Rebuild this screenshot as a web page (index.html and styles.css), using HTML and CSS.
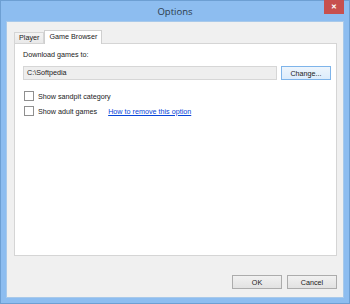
FILE: index.html
```html
<!DOCTYPE html>
<html lang="en">
<head>
    <meta charset="UTF-8">
    <title>Options</title>
    <link rel="stylesheet" href="styles.css">
</head>
<body>
    <div class="window">
        <div class="title-bar">
            <div class="title">Options</div>
            <div class="close-btn">&#x2715;</div>
        </div>

        <div class="client">
            <div class="tabs">
                <div class="tab">Player</div>
                <div class="tab active">Game Browser</div>
            </div>

            <div class="tab-panel">
                <div class="field-label">Download games to:</div>
                <div class="path-row">
                    <div class="path-box">C:\Softpedia</div>
                    <div class="button change-btn">Change...</div>
                </div>

                <div class="check-row first">
                    <span class="checkbox"></span>
                    <span class="check-label">Show sandpit category</span>
                </div>
                <div class="check-row">
                    <span class="checkbox"></span>
                    <span class="check-label">Show adult games</span>
                    <a class="link" href="#">How to remove this option</a>
                </div>
            </div>

            <div class="button-row">
                <div class="button">OK</div>
                <div class="button">Cancel</div>
            </div>
        </div>
    </div>
</body>
</html>
```

FILE: styles.css
```css
:root {
    --frame: #8dbdf0;
    --frame-edge: #6d9fd3;
    --face: #f0f0f0;
    --line: #d5d5d5;
    --text: #1a1a1a;
}

* {
    margin: 0;
    padding: 0;
    box-sizing: border-box;
}

body {
    width: 350px;
    height: 304px;
    overflow: hidden;
    font-family: 'Liberation Sans', Arial, sans-serif;
    font-size: 7.2px;
    color: var(--text);
}

.window {
    width: 350px;
    height: 304px;
    background: var(--frame);
    border: 1px solid var(--frame-edge);
    display: flex;
    flex-direction: column;
    padding: 0 5px 5px 5px;
}

.title-bar {
    height: 20px;
    flex-shrink: 0;
    position: relative;
    display: flex;
    justify-content: center;
    align-items: center;
}

.title {
    font-family: 'Open Sans', sans-serif;
    font-size: 9.5px;
    color: #2b3a4a;
    padding-top: 1px;
}

.close-btn {
    position: absolute;
    top: -1px;
    right: 0;
    width: 20px;
    height: 14px;
    background: #c7504e;
    color: #fff;
    font-size: 7px;
    font-weight: bold;
    display: flex;
    justify-content: center;
    align-items: center;
}

.client {
    flex: 1;
    background: var(--face);
    border: 1px solid #a8c9ea;
    display: flex;
    flex-direction: column;
    padding: 7px 6px 8px 7px;
}

.tabs {
    display: flex;
    align-items: flex-end;
    height: 14px;
}

.tab {
    height: 11px;
    padding: 0 4px;
    border: 1px solid var(--line);
    border-bottom: none;
    background: linear-gradient(#f3f3f3, #e9e9e9);
    line-height: 10px;
}

.tab.active {
    height: 14px;
    background: #fff;
    border-color: #cfcfcf;
    padding: 0 4px;
    line-height: 12px;
    margin-bottom: -1px;
    position: relative;
}

.tab-panel {
    height: 213px;
    background: #fff;
    border: 1px solid var(--line);
    padding: 5px 5px 0 8px;
}

.field-label {
    height: 11px;
    line-height: 11px;
}

.path-row {
    display: flex;
    gap: 4px;
    margin-top: 6px;
}

.path-box {
    width: 254px;
    height: 14px;
    border: 1px solid #d6d6d6;
    background: #eeeeee;
    padding-left: 3px;
    line-height: 12px;
}

.button {
    height: 14px;
    border: 1px solid #acacac;
    background: linear-gradient(#f1f1f1, #e2e2e2);
    display: flex;
    justify-content: center;
    align-items: center;
}

.change-btn {
    width: 50px;
    border-color: #7eb4ea;
    background: linear-gradient(#eef5fc, #dcecfc);
}

.check-row {
    display: flex;
    align-items: center;
    height: 10px;
    margin-top: 5px;
    padding-left: 1px;
}

.check-row.first {
    margin-top: 11px;
}

.checkbox {
    width: 10px;
    height: 10px;
    border: 1px solid #8f8f8f;
    background: #fff;
    margin-right: 4px;
}

.link {
    color: #0645d8;
    text-decoration: underline;
    margin-left: 11px;
}

.button-row {
    display: flex;
    justify-content: flex-end;
    gap: 5px;
    margin-top: auto;
}

.button-row .button {
    width: 50px;
}
```
